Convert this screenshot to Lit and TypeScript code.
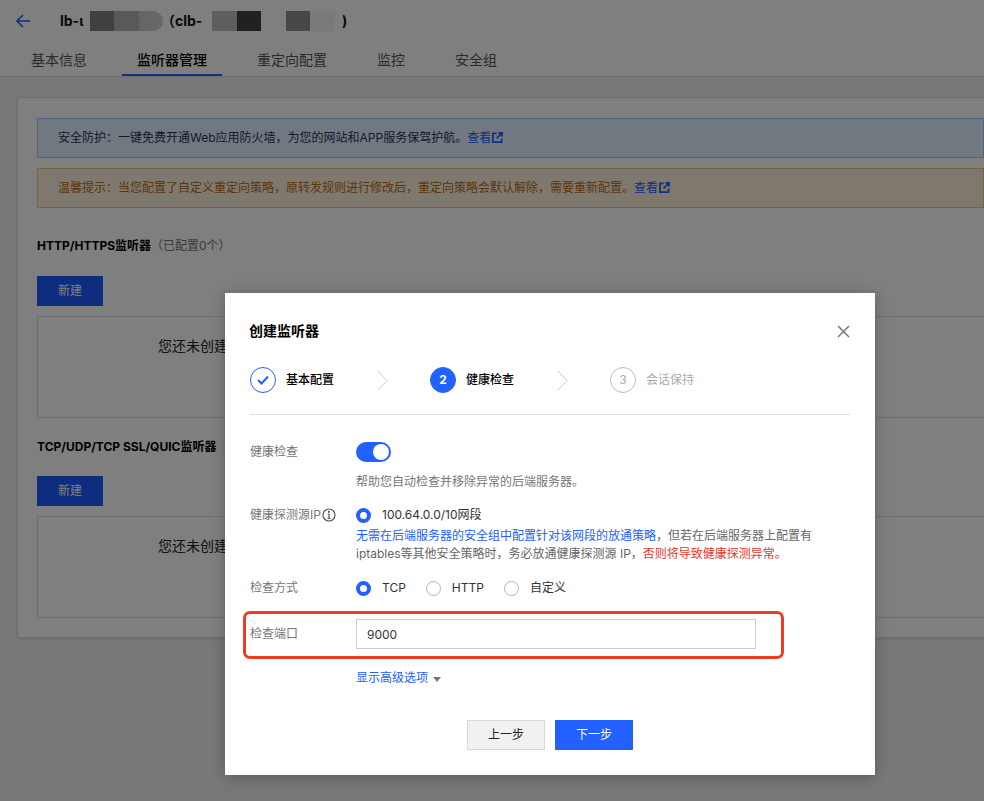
import { LitElement, html, css } from 'lit';
import { customElement } from 'lit/decorators.js';

const FONT = css`Inter, "Noto Sans CJK SC", sans-serif`;

const linkIcon = html`<svg class="ext" viewBox="0 0 12 12" width="11" height="11" fill="none" stroke="currentColor" stroke-width="1.9">
  <path d="M5 1.5H1v9.5h9.5V7" /><path d="M5 7 10.5 1.5M7 1h4v4" />
</svg>`;

@customElement('app-root')
export class AppRoot extends LitElement {
  static styles = css`
    :host {
      display: block;
      position: relative;
      height: 801px;
      overflow: hidden;
      background: #f1f1f2;
      font-family: ${FONT};
      font-size: 12px;
      line-height: 18px;
      color: #222;
    }

    /* page behind the dialog */
    .head {
      background: #fff;
      border-bottom: 1px solid #dcdcdc;
      height: 76px;
    }
    .title-row {
      display: flex;
      align-items: center;
      height: 42px;
      padding-left: 16px;
      font-size: 14px;
      font-weight: 700;
      color: #111;
    }
    .back { color: #2260ff; margin-right: 30px; }
    .mosaic { display: flex; height: 20px; }
    .mosaic i { display: block; width: 24.5px; }
    .first { margin-left: 6px; }
    .second { margin-left: 10px; }
    .m-a { background: #808085; }
    .m-b { background: #b2b2b8; }
    .m-c { background: #cdcdd2; border-radius: 0 10px 10px 0; }
    .m-d { background: #bcbcc2; }
    .m-e { background: #434347; }
    .m-f { background: #fff; }
    .m-g { background: #8e8e94; }
    .m-h { background: #f4f4f8; }
    .open { margin-left: -2px; }
    .shut { margin-left: 7px; }
    .tabs { display: flex; gap: 20px; padding-left: 16px; }
    .tab {
      height: 32px;
      padding: 0 15px;
      font-size: 14px;
      line-height: 36px;
      color: #555;
      border-bottom: 2px solid transparent;
    }
    .tab.on { color: #000; font-weight: 500; border-bottom-color: #2260ff; }

    .body { padding: 20px 0 0 17px; }
    .card {
      background: #fff;
      border: 1px solid #dfdfdf;
      border-right: 0;
      box-shadow: 0 1px 4px rgba(0, 0, 0, 0.12);
      padding: 20px 0 19px 19px;
    }
    .notice {
      box-sizing: border-box;
      height: 40px;
      padding-left: 20px;
      line-height: 38px;
      border: 1px solid;
    }
    .notice a { color: #2260ff; }
    .ext { vertical-align: -1px; margin-left: 1px; }
    .notice.info { background: #e5f0ff; border-color: #a2c6ff; color: #26365c; }
    .notice.warn { background: #fff1dc; border-color: #f2c77c; color: #b86b14; margin-top: 10px; }
    h3 { margin: 0; font-size: 12px; font-weight: 700; color: #000; }
    h3 span { font-weight: 400; color: #777; }
    .h-1 { margin-top: 29px; }
    .h-2 { margin-top: 20px; }
    .new {
      display: block;
      width: 66px;
      height: 30px;
      margin-top: 21px;
      border: 0;
      padding: 0;
      background: #1e5aff;
      color: #fff;
      font: inherit;
    }
    .h-2 + .new { margin-top: 20px; }
    .empty {
      box-sizing: border-box;
      height: 102px;
      margin-top: 10px;
      padding: 20px 0 0 120px;
      border: 1px solid #dcdcdc;
      border-right: 0;
      font-size: 14px;
      color: #222;
    }

    /* dialog */
    .mask {
      position: absolute;
      inset: 0;
      padding: 293px 0 0 225px;
      background: rgba(0, 0, 0, 0.5);
    }
    .dialog {
      position: relative;
      box-sizing: border-box;
      width: 650px;
      height: 482px;
      padding: 28px 25px 0;
      background: #fff;
      box-shadow: 0 2px 14px rgba(0, 0, 0, 0.25);
    }
    .d-title {
      display: flex;
      justify-content: space-between;
      align-items: center;
      height: 20px;
      margin-left: -1px;
      font-size: 14px;
      font-weight: 700;
      color: #000;
    }
    .close { color: #777; }
    .steps {
      display: flex;
      align-items: center;
      height: 26px;
      margin-top: 26px;
      padding-bottom: 21px;
      border-bottom: 1px solid #dcdcdc;
    }
    .step { display: flex; align-items: center; gap: 10px; width: 180px; color: #000; font-weight: 500; }
    .dot {
      box-sizing: border-box;
      display: flex;
      align-items: center;
      justify-content: center;
      width: 26px;
      height: 26px;
      border-radius: 50%;
      border: 1px solid #2260ff;
      color: #2260ff;
      font-weight: 700;
    }
    .step.now .dot { background: #2260ff; color: #fff; }
    .step.later { color: #aaa; font-weight: 400; }
    .step.later .dot { border-color: #bbb; color: #aaa; font-weight: 400; }
    .chev { margin-left: 33px; }

    .row { display: grid; grid-template-columns: 106px 1fr; }
    .label { color: #777; display: flex; align-items: center; gap: 1px; height: 18px; }
    .switch {
      position: relative;
      display: block;
      width: 35px;
      height: 20px;
      border-radius: 10px;
      background: #2260ff;
    }
    .switch::after {
      content: '';
      position: absolute;
      top: 2px;
      right: 2px;
      width: 16px;
      height: 16px;
      border-radius: 50%;
      background: #fff;
    }
    .r-switch { margin-top: 27px; align-items: center; }
    .help { margin-top: 11px; color: #777; }
    .r-ip { margin-top: 15px; }
    .r-way { margin-top: 16px; }
    .radios { display: flex; color: #333; }
    .radio { display: flex; align-items: center; gap: 11px; margin-right: 20px; }
    .radio::before {
      content: '';
      box-sizing: border-box;
      width: 15px;
      height: 15px;
      border-radius: 50%;
      border: 1px solid #b5b5b5;
    }
    .radio.on::before { border: 4.5px solid #2260ff; }
    .note { margin-top: 3px; color: #666; }
    .note b { font-weight: 400; color: #2260ff; }
    .note em { font-style: normal; color: #e5352b; }
    .r-port { position: relative; margin-top: 22px; align-items: center; }
    .port {
      box-sizing: border-box;
      width: 400px;
      height: 30px;
      padding: 0 10px;
      border: 1px solid #ccc;
      font: inherit;
      color: #333;
      outline: 0;
    }
    .mark {
      position: absolute;
      left: -7px;
      top: -8px;
      width: 541px;
      height: 48px;
      box-sizing: border-box;
      border: 3px solid #f03c1e;
      border-radius: 7px;
    }
    .more { margin: 20px 0 0 106px; color: #2260ff; display: flex; align-items: center; gap: 5px; }
    .caret { border: 4px solid transparent; border-top: 5px solid #777; border-bottom: 0; margin-top: 2px; }
    .foot { display: flex; justify-content: center; gap: 10px; margin-top: 33px; }
    .foot button {
      box-sizing: border-box;
      width: 78px;
      height: 30px;
      padding: 0;
      border: 1px solid #d8d8d8;
      background: #f1f1f1;
      color: #222;
      font: inherit;
    }
    .foot button.primary { background: #2260ff; border-color: #2260ff; color: #fff; }
  `;

  private step(kind: string, mark: unknown, text: string, chevron: boolean) {
    return html`<div class="step ${kind}">
      <span class="dot">${mark}</span><span>${text}</span>
      ${chevron
        ? html`<svg class="chev" width="11" height="21" viewBox="0 0 11 21" fill="none" stroke="#ccc"><path d="M1 1l9 9.5L1 20" /></svg>`
        : ''}
    </div>`;
  }

  render() {
    return html`
      <div class="head">
        <div class="title-row">
          <svg class="back" width="14" height="14" viewBox="0 0 14 14" fill="none" stroke="currentColor" stroke-width="1.6"><path d="M7 1 1 7l6 6M1 7h13" /></svg>
          <span>lb-ι</span>
          <span class="mosaic first">
            <i class="m-a"></i><i class="m-b"></i><i class="m-c"></i>
          </span>
          <span class="open">（clb-</span>
          <span class="mosaic second">
            <i class="m-d"></i><i class="m-e"></i><i class="m-f"></i><i class="m-g"></i><i class="m-h"></i>
          </span>
          <span class="shut">)</span>
        </div>
        <div class="tabs">
          <div class="tab">基本信息</div>
          <div class="tab on">监听器管理</div>
          <div class="tab">重定向配置</div>
          <div class="tab">监控</div>
          <div class="tab">安全组</div>
        </div>
      </div>

      <div class="body">
        <div class="card">
          <div class="notice info">安全防护：一键免费开通Web应用防火墙，为您的网站和APP服务保驾护航。<a>查看${linkIcon}</a></div>
          <div class="notice warn">温馨提示：当您配置了自定义重定向策略，原转发规则进行修改后，重定向策略会默认解除，需要重新配置。<a>查看${linkIcon}</a></div>
          <h3 class="h-1">HTTP/HTTPS监听器<span>（已配置0个）</span></h3>
          <button class="new">新建</button>
          <div class="empty">您还未创建监听器</div>
          <h3 class="h-2">TCP/UDP/TCP SSL/QUIC监听器</h3>
          <button class="new">新建</button>
          <div class="empty">您还未创建监听器</div>
        </div>
      </div>

      <div class="mask">
        <div class="dialog">
          <div class="d-title">
            <span>创建监听器</span>
            <svg class="close" width="13" height="13" viewBox="0 0 13 13" fill="none" stroke="currentColor" stroke-width="1.5"><path d="M1 1l11 11M12 1 1 12" /></svg>
          </div>
          <div class="steps">
            ${this.step('done', html`<svg width="12" height="10" viewBox="0 0 12 10" fill="none" stroke="currentColor" stroke-width="2"><path d="M1 5l3.5 3.5L11 1.5" /></svg>`, '基本配置', true)}
            ${this.step('now', '2', '健康检查', true)}
            ${this.step('later', '3', '会话保持', false)}
          </div>

          <div class="row r-switch">
            <div class="label">健康检查</div>
            <span class="switch"></span>
          </div>
          <div class="row help"><span></span><span>帮助您自动检查并移除异常的后端服务器。</span></div>

          <div class="row r-ip">
            <div class="label">健康探测源IP
              <svg width="14" height="14" viewBox="0 0 14 14" fill="none" stroke="#555" stroke-width="1.2"><circle cx="7" cy="7" r="6" /><path d="M7 6v4.5M5.5 10.5h3M5.8 6H7" /><circle cx="7" cy="3.8" r=".5" fill="#555" /></svg>
            </div>
            <div>
              <div class="radios"><span class="radio on">100.64.0.0/10网段</span></div>
              <div class="note"><b>无需在后端服务器的安全组中配置针对该网段的放通策略</b>，但若在后端服务器上配置有<br />iptables等其他安全策略时，务必放通健康探测源 IP，<em>否则将导致健康探测异常。</em></div>
            </div>
          </div>

          <div class="row r-way">
            <div class="label">检查方式</div>
            <div class="radios">
              <span class="radio on">TCP</span>
              <span class="radio">HTTP</span>
              <span class="radio">自定义</span>
            </div>
          </div>

          <div class="row r-port">
            <div class="label">检查端口</div>
            <input class="port" .value=${'9000'} />
            <div class="mark"></div>
          </div>

          <div class="more">显示高级选项<span class="caret"></span></div>

          <div class="foot">
            <button>上一步</button>
            <button class="primary">下一步</button>
          </div>
        </div>
      </div>
    `;
  }
}
